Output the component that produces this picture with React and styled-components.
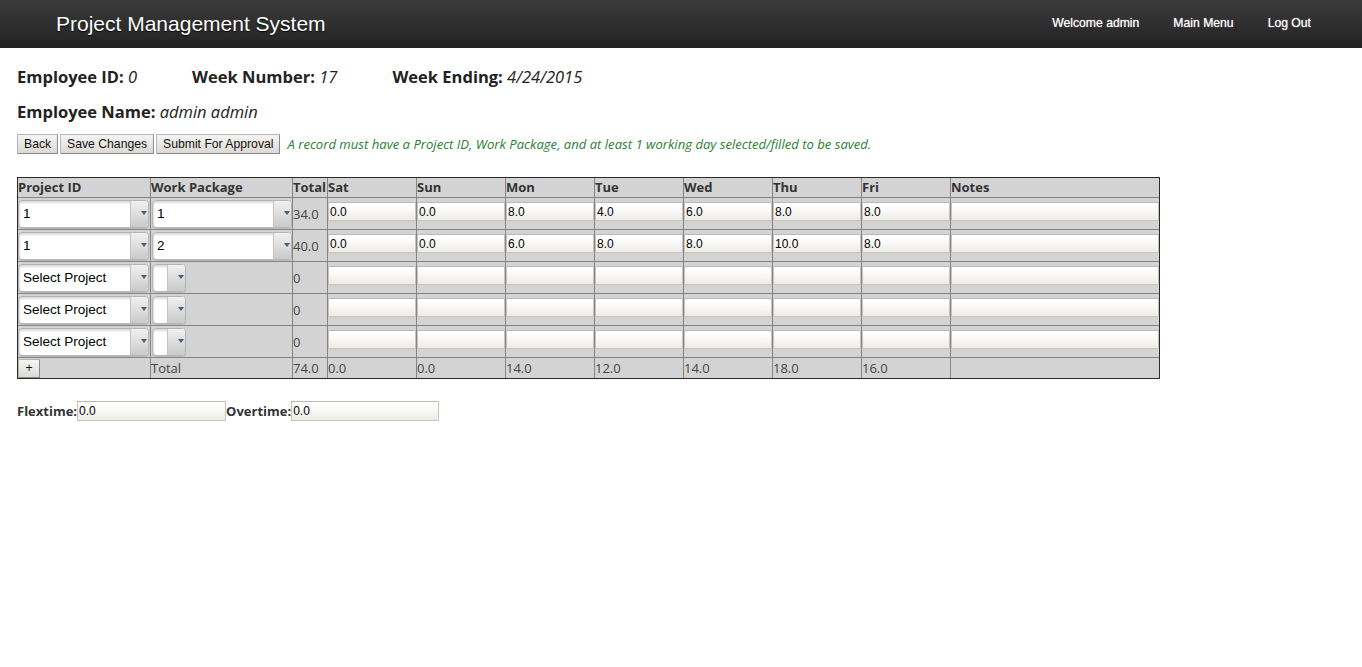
import React from 'react';
import styled, { createGlobalStyle } from 'styled-components';

const GlobalStyle = createGlobalStyle`
  * { box-sizing: border-box; }
  body {
    margin: 0;
    background: #fff;
    font-family: "Open Sans", "Liberation Sans", sans-serif;
    color: #222;
  }
`;

const TopBar = styled.header`
  height: 48px;
  background: linear-gradient(#3b3b3b, #232323);
  display: flex;
  align-items: center;
  justify-content: space-between;
  padding: 0 51px 0 56px;
`;

const Brand = styled.h1`
  margin: 0;
  font: 21px "Liberation Sans", Arial, sans-serif;
  color: #fff;
  text-shadow: 0 1px 1px #000;
`;

const Nav = styled.nav`
  display: flex;
  gap: 34px;
  margin-top: -3px;
`;

const NavLink = styled.a`
  font: 12.2px "Liberation Sans", Arial, sans-serif;
  color: #fff;
  text-decoration: none;
  text-shadow: 0 0 1px rgba(255, 255, 255, 0.7);
`;

const Content = styled.main`
  padding: 18px 17px;
`;

const InfoRow = styled.div`
  display: flex;
  gap: 55px;
  font-size: 16.5px;
  line-height: 22px;
  margin-bottom: ${(p) => p.$mb || 0}px;
  b { font-weight: 700; }
  em { font-style: italic; }
`;

const ActionBar = styled.div`
  display: flex;
  align-items: center;
  gap: 2px;
  margin-top: 11px;
`;

const Button = styled.button`
  height: ${(p) => p.$h || 20}px;
  padding: 0 6px;
  font: 12.2px "Liberation Sans", Arial, sans-serif;
  color: #111;
  background: linear-gradient(#f6f5f3, #dcd9d4);
  border: 1px solid;
  border-color: #b5b5b5 #8a8a8a #8a8a8a #b5b5b5;
  border-radius: 1px;
  cursor: pointer;
`;

const Notice = styled.span`
  margin-left: 5px;
  font-size: 13.1px;
  font-style: italic;
  color: #2b8036;
`;

const Sheet = styled.table`
  margin-top: 23px;
  table-layout: fixed;
  border-collapse: separate;
  border-spacing: 0;
  border: 1px solid #2a2a2a;
  background: #d3d3d3;
`;

const Row = styled.tr`
  height: ${(p) => p.$h}px;
`;

const Cell = styled.td`
  padding: 0;
  vertical-align: middle;
  border-left: 1px solid #858585;
  border-top: 1px solid #858585;
  font-size: 13px;
  color: #444;
  white-space: nowrap;
  tr:first-child > & { border-top: none; }
  &:first-child { border-left: none; }
`;

const HeadCell = styled(Cell).attrs({ as: 'th' })`
  text-align: left;
  font-weight: 700;
  color: #333;
  line-height: 17px;
`;

const SelectBox = styled.div`
  display: flex;
  height: 28px;
  width: ${(p) => p.$w || 'calc(100% - 1px)'};
  margin-left: ${(p) => p.$ml || 0}px;
  border: 1px solid #b4b4b4;
  border-radius: 4px;
  overflow: hidden;
  background: #fff;
  box-shadow: 0 1px 1px rgba(0, 0, 0, 0.12);
`;

const SelectValue = styled.span`
  flex: 1;
  display: flex;
  align-items: center;
  padding: 0 4px;
  font: 13.5px "Liberation Sans", Arial, sans-serif;
  color: #000;
  box-shadow: inset 1px 2px 2px rgba(0, 0, 0, 0.14);
`;

const SelectArrow = styled.span`
  width: 18px;
  display: flex;
  align-items: center;
  justify-content: flex-end;
  padding: 0 1px 2px 0;
  border-left: 1px solid #c4c4c4;
  background: linear-gradient(#f1f1f1, #c9c9c9);
  &::after {
    content: '';
    border-left: 3.5px solid transparent;
    border-right: 3.5px solid transparent;
    border-top: 4px solid #3f6179;
  }
`;

const Field = styled.input`
  display: block;
  width: ${(p) => p.$w || '100%'};
  height: ${(p) => p.$h || 19}px;
  margin: 0 0 ${(p) => p.$lift || 0}px;
  padding: 0 1px;
  font: 12px "Liberation Sans", Arial, sans-serif;
  color: #000;
  border: 1px solid #c9c5bd;
  border-top-color: #bdb9b2;
  background: linear-gradient(#ffffff 20%, #eeebe6);
  outline: none;
`;

const ExtraRow = styled.div`
  display: flex;
  align-items: center;
  margin-top: 22px;
  font-size: 13px;
  font-weight: 700;
  color: #333;
`;

const days = ['Sat', 'Sun', 'Mon', 'Tue', 'Wed', 'Thu', 'Fri'];
const widths = [132, 142, 35, 89, 89, 89, 89, 89, 89, 89, 209];

const rows = [
  { project: '1', pkg: '1', total: '34.0', hours: ['0.0', '0.0', '8.0', '4.0', '6.0', '8.0', '8.0'] },
  { project: '1', pkg: '2', total: '40.0', hours: ['0.0', '0.0', '6.0', '8.0', '8.0', '10.0', '8.0'] },
  { project: 'Select Project', pkg: null, total: '0', hours: Array(7).fill('') },
  { project: 'Select Project', pkg: null, total: '0', hours: Array(7).fill('') },
  { project: 'Select Project', pkg: null, total: '0', hours: Array(7).fill('') },
];

const dayTotals = ['0.0', '0.0', '14.0', '12.0', '14.0', '18.0', '16.0'];

const Select = ({ value, width, ml }) => (
  <SelectBox $w={width} $ml={ml}>
    <SelectValue>{value}</SelectValue>
    <SelectArrow />
  </SelectBox>
);

const App = () => {
  return (
    <>
      <GlobalStyle />
      <TopBar>
        <Brand>Project Management System</Brand>
        <Nav>
          <NavLink href="#">Welcome admin</NavLink>
          <NavLink href="#">Main Menu</NavLink>
          <NavLink href="#">Log Out</NavLink>
        </Nav>
      </TopBar>
      <Content>
        <InfoRow $mb={13}>
          <span><b>Employee ID:</b> <em>0</em></span>
          <span><b>Week Number:</b> <em>17</em></span>
          <span><b>Week Ending:</b> <em>4/24/2015</em></span>
        </InfoRow>
        <InfoRow>
          <span><b>Employee Name:</b> <em>admin admin</em></span>
        </InfoRow>
        <ActionBar>
          <Button>Back</Button>
          <Button>Save Changes</Button>
          <Button>Submit For Approval</Button>
          <Notice>
            A record must have a Project ID, Work Package, and at least 1 working day selected/filled to be saved.
          </Notice>
        </ActionBar>

        <Sheet>
          <colgroup>
            {widths.map((w, i) => (
              <col key={i} style={{ width: w }} />
            ))}
          </colgroup>
          <tbody>
            <Row $h={19}>
              <HeadCell>Project ID</HeadCell>
              <HeadCell>Work Package</HeadCell>
              <HeadCell>Total</HeadCell>
              {days.map((d) => (
                <HeadCell key={d}>{d}</HeadCell>
              ))}
              <HeadCell>Notes</HeadCell>
            </Row>
            {rows.map((r, i) => (
              <Row $h={32} key={i}>
                <Cell>
                  <Select value={r.project} />
                </Cell>
                <Cell>
                  {r.pkg ? (
                    <Select value={r.pkg} ml={1} />
                  ) : (
                    <Select value="" width="34px" ml={1} />
                  )}
                </Cell>
                <Cell>{r.total}</Cell>
                {r.hours.map((h, j) => (
                  <Cell key={j}>
                    <Field $lift={4} defaultValue={h} />
                  </Cell>
                ))}
                <Cell>
                  <Field $lift={4} defaultValue="" />
                </Cell>
              </Row>
            ))}
            <Row $h={20}>
              <Cell>
                <Button $h={19} style={{ width: 22 }}>+</Button>
              </Cell>
              <Cell>Total</Cell>
              <Cell>74.0</Cell>
              {dayTotals.map((t, j) => (
                <Cell key={j}>{t}</Cell>
              ))}
              <Cell />
            </Row>
          </tbody>
        </Sheet>

        <ExtraRow>
          <span>Flextime:</span>
          <Field $w="149px" $h={20} defaultValue="0.0" />
          <span>Overtime:</span>
          <Field $w="148px" $h={20} defaultValue="0.0" />
        </ExtraRow>
      </Content>
    </>
  );
};

export default App;
